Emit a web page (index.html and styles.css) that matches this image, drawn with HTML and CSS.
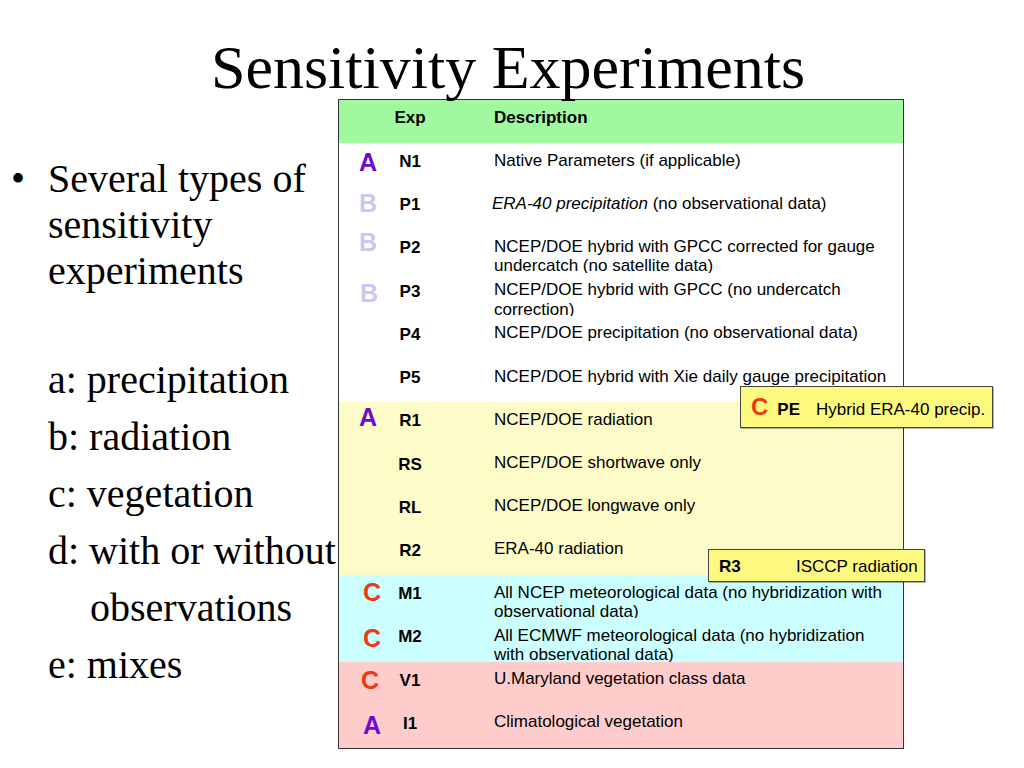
FILE: index.html
```html
<!DOCTYPE html>
<html lang="en">
<head>
<meta charset="utf-8">
<title>Sensitivity Experiments</title>
<link rel="stylesheet" href="styles.css">
</head>
<body>
<div class="slide">
  <h1 class="title">Sensitivity Experiments</h1>
  <div class="content">
    <div class="bullets">
      <div class="bullet-item">
        <span class="dot">•</span>
        <p class="lead">Several types of<br>sensitivity<br>experiments</p>
      </div>
      <div class="list">
        <p>a: precipitation</p>
        <p>b: radiation</p>
        <p>c: vegetation</p>
        <p class="hang">d: with or without<br>observations</p>
        <p>e: mixes</p>
      </div>
    </div>
    <div class="table">
      <div class="row g-head"><span class="let"></span><span class="exp head-pad">Exp</span><span class="desc head-pad bold">Description</span></div>
      <div class="row g-white"><span class="let ca">A</span><span class="exp">N1</span><span class="desc">Native Parameters (if applicable)</span></div>
      <div class="row g-white"><span class="let cb p5">B</span><span class="exp">P1</span><span class="desc"><i class="it">ERA-40 precipitation</i> (no observational data)</span></div>
      <div class="row g-white"><span class="let cb p1">B</span><span class="exp">P2</span><span class="desc">NCEP/DOE hybrid with GPCC corrected for gauge<br>undercatch (no satellite data)</span></div>
      <div class="row g-white"><span class="let cb p8 r1">B</span><span class="exp">P3</span><span class="desc">NCEP/DOE hybrid with GPCC (no undercatch<br>correction)</span></div>
      <div class="row g-white"><span class="let"></span><span class="exp">P4</span><span class="desc">NCEP/DOE precipitation (no observational data)</span></div>
      <div class="row g-white"><span class="let"></span><span class="exp">P5</span><span class="desc">NCEP/DOE hybrid with Xie daily gauge precipitation</span></div>
      <div class="row g-yel"><span class="let ca p3">A</span><span class="exp">R1</span><span class="desc">NCEP/DOE radiation</span></div>
      <div class="row g-yel"><span class="let"></span><span class="exp">RS</span><span class="desc">NCEP/DOE shortwave only</span></div>
      <div class="row g-yel"><span class="let"></span><span class="exp">RL</span><span class="desc">NCEP/DOE longwave only</span></div>
      <div class="row g-yel"><span class="let"></span><span class="exp">R2</span><span class="desc">ERA-40 radiation</span></div>
      <div class="row g-cyan"><span class="let cc p5 r4">C</span><span class="exp">M1</span><span class="desc">All NCEP meteorological data (no hybridization with<br>observational data)</span></div>
      <div class="row g-cyan"><span class="let cc p8 r4">C</span><span class="exp">M2</span><span class="desc">All ECMWF meteorological data (no hybridization<br>with observational data)</span></div>
      <div class="row g-pink"><span class="let cc p6 r2">C</span><span class="exp">V1</span><span class="desc">U.Maryland vegetation class data</span></div>
      <div class="row g-pink"><span class="let ca p8 r4">A</span><span class="exp">I1</span><span class="desc">Climatological vegetation</span></div>
    </div>
  </div>
  <div class="callout pe">
    <span class="big cc">C</span><span class="bold tag-pe">PE</span><span class="note-pe">Hybrid ERA-40 precip.</span>
  </div>
  <div class="callout r3">
    <span class="bold tag-r3">R3</span><span>ISCCP radiation</span>
  </div>
</div>
</body>
</html>
```

FILE: styles.css
```css
html, body {
  margin: 0;
  padding: 0;
  background: #ffffff;
}

.slide {
  position: relative;
  width: 1024px;
  height: 768px;
  overflow: hidden;
  background: #ffffff;
  color: #000000;
  font-family: "Liberation Serif", "Times New Roman", serif;
}

.title {
  position: relative;
  z-index: 1;
  box-sizing: border-box;
  height: 99px;
  margin: 0;
  padding: 32px 8px 0 0;
  font-size: 62px;
  line-height: 70px;
  font-weight: normal;
  text-align: center;
}

.content {
  display: flex;
  align-items: flex-start;
}

/* left bullet column */
.bullets {
  width: 338px;
  flex: none;
  padding-top: 57px;
  font-size: 40px;
}

.bullet-item {
  display: flex;
}

.dot {
  width: 37px;
  margin-left: 11px;
  flex: none;
  line-height: 46px;
}

.lead {
  margin: 0;
  line-height: 46px;
}

.list {
  margin-top: 57px;
  padding-left: 48px;
}

.list p {
  margin: 0;
  line-height: 57px;
  white-space: nowrap;
}

.list .hang {
  padding-left: 42px;
  text-indent: -42px;
}

/* table */
.table {
  width: 566px;
  height: 650px;
  flex: none;
  box-sizing: border-box;
  border: 1px solid #333333;
  display: grid;
  grid-template-rows: 43px repeat(14, 1fr);
  font-family: "Liberation Sans", Arial, sans-serif;
  font-size: 17px;
}

.row {
  display: grid;
  grid-template-columns: 45px 52px 1fr;
  min-height: 0;
}

.g-head { background: #a0f8a0; }
.g-white { background: #ffffff; }
.g-yel { background: #fdfbc8; }
.g-cyan { background: #ccffff; }
.g-pink { background: #ffcccc; }

.let {
  padding-top: 7px;
  padding-left: 20px;
  font-size: 25px;
  line-height: 25px;
  font-weight: bold;
}

.let.p1 { padding-top: 1px; }
.let.p3 { padding-top: 3px; }
.let.p5 { padding-top: 5px; }
.let.p6 { padding-top: 6px; }
.let.p8 { padding-top: 8px; }
.let.r1 { padding-left: 21px; }
.let.r2 { padding-left: 22px; }
.let.r4 { padding-left: 24px; }

.ca { color: #6a0ad2; }
.cb { color: #c8c8f6; }
.cc { color: #ee3a12; }

.exp {
  padding-top: 8px;
  line-height: 21px;
  font-weight: bold;
  text-align: center;
  white-space: nowrap;
}

.desc {
  padding-top: 7.5px;
  padding-left: 58px;
  line-height: 19.5px;
  white-space: nowrap;
}

.head-pad {
  padding-top: 7px;
}

.desc.head-pad {
  padding-top: 7.5px;
}

.bold {
  font-weight: bold;
}

.it {
  font-style: italic;
  margin-left: -2px;
}

/* callouts */
.callout {
  position: absolute;
  box-sizing: border-box;
  display: flex;
  align-items: baseline;
  border: 1px solid #444444;
  background: #fdf97f;
  box-shadow: 1px 1px 0 rgba(0, 0, 0, 0.3);
  font-family: "Liberation Sans", Arial, sans-serif;
  font-size: 17px;
  line-height: 21px;
  white-space: nowrap;
}

.pe {
  left: 740px;
  top: 386px;
  width: 253px;
  height: 42px;
  padding: 8px 0 0 10px;
}

.big {
  font-size: 24px;
  line-height: 24px;
  font-weight: bold;
}

.tag-pe {
  margin-left: 9px;
}

.note-pe {
  margin-left: 16px;
}

.r3 {
  left: 708px;
  top: 549px;
  width: 217px;
  height: 33px;
  padding: 6px 0 0 10px;
}

.tag-r3 {
  width: 77px;
  flex: none;
}
```
